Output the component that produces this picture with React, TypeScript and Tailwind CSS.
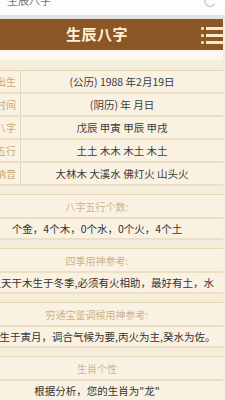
import React from 'react';

const rows = [
    {label: '出生', value: '(公历) 1988 年2月19日'},
    {label: '时间', value: '(阴历) 年 月日'},
    {label: '八字', value: '戊辰 甲寅 甲辰 甲戌'},
    {label: '五行', value: '土土 木木 木土 木土'},
    {label: '纳音', value: '大林木 大溪水 佛灯火 山头火'},
];

const sections = [
    {title: '八字五行个数:', text: '个金，4个木，0个水，0个火，4个土'},
    {title: '四季用神参考:', text: '日主天干木生于冬季,必须有火相助，最好有土，水'},
    {title: '穷通宝鉴调候用神参考:', text: '甲木生于寅月，调合气候为要,丙火为主,癸水为佐。'},
    {title: '生肖个性', text: '根据分析，您的生肖为"龙"'},
];

export default function App() {
    return (
        <div
            className="w-[225px] h-[400px] overflow-hidden bg-[#f6eedc]"
            style={{fontFamily: '"Noto Sans CJK SC", "Noto Sans", sans-serif'}}
        >
            {/* browser address bar, scrolled so only the lower part shows */}
            <div className="h-[15px] bg-[#fdfdfd] flex items-start justify-between overflow-hidden">
                <span className="text-[11px] leading-[11px] text-[#777] pl-[7px] mt-[-5px]">生辰八字</span>
                <svg width="16" height="16" viewBox="0 0 16 16" className="mr-[7px] mt-[-7px]">
                    <path d="M12.8 6 A5.2 5.2 0 1 0 12.8 10.5" fill="none" stroke="#cfcfcf" strokeWidth="1.6"/>
                </svg>
            </div>
            <div className="h-[4px] bg-[#e2e2e2]"/>

            <div className="w-[252px] ml-[-29px]">
                {/* header */}
                <div className="h-[31px] bg-[#8b5727] flex items-center justify-center relative">
                    <span className="text-[15px] font-bold text-[#fdf0d8] tracking-[0.5px]">生辰八字</span>
                    <div className="absolute right-[-2px] top-[8px] flex flex-col gap-[4px]">
                        {[0, 1, 2].map(i => (
                            <div key={i} className="flex items-center gap-[2px]">
                                <div className="w-[3px] h-[3px] rounded-full bg-[#fde9c8]"/>
                                <div className="w-[19px] h-[3px] bg-[#fde9c8]"/>
                            </div>
                        ))}
                    </div>
                </div>
                <div className="h-[10px] bg-[#fcf8ef]"/>
                <div className="h-[10px] bg-[#f6eedc]"/>

                {/* table */}
                <div className="border-t border-[#e6d5b2]">
                    {rows.map(r => (
                        <div key={r.label} className="flex h-[23px] border-b-2 border-[#ecdfc3] bg-[#f9f2e3]">
                            <div className="w-[50px] border-r border-[#e6d5b2] flex items-center justify-end pr-[4px] text-[10px] text-[#c9a877]">
                                {r.label}
                            </div>
                            <div className="flex-1 flex items-center justify-center text-[10.5px] text-[#3a3a3a]">
                                {r.value}
                            </div>
                        </div>
                    ))}
                </div>

                {/* sections */}
                <div className="mt-[8px] flex flex-col gap-[8px]">
                    {sections.map(s => (
                        <div key={s.title} className="border-t border-[#e6d5b2] bg-[#f9f2e3]">
                            <div className="h-[24px] flex items-center justify-center border-b-2 border-[#ecdfc3] text-[10px] text-[#cfb28b]">
                                {s.title}
                            </div>
                            <div className="h-[21px] flex items-center justify-center border-b-2 border-[#ecdfc3] text-[10.5px] text-[#333] whitespace-nowrap">
                                {s.text}
                            </div>
                        </div>
                    ))}
                </div>
            </div>
        </div>
    );
}
